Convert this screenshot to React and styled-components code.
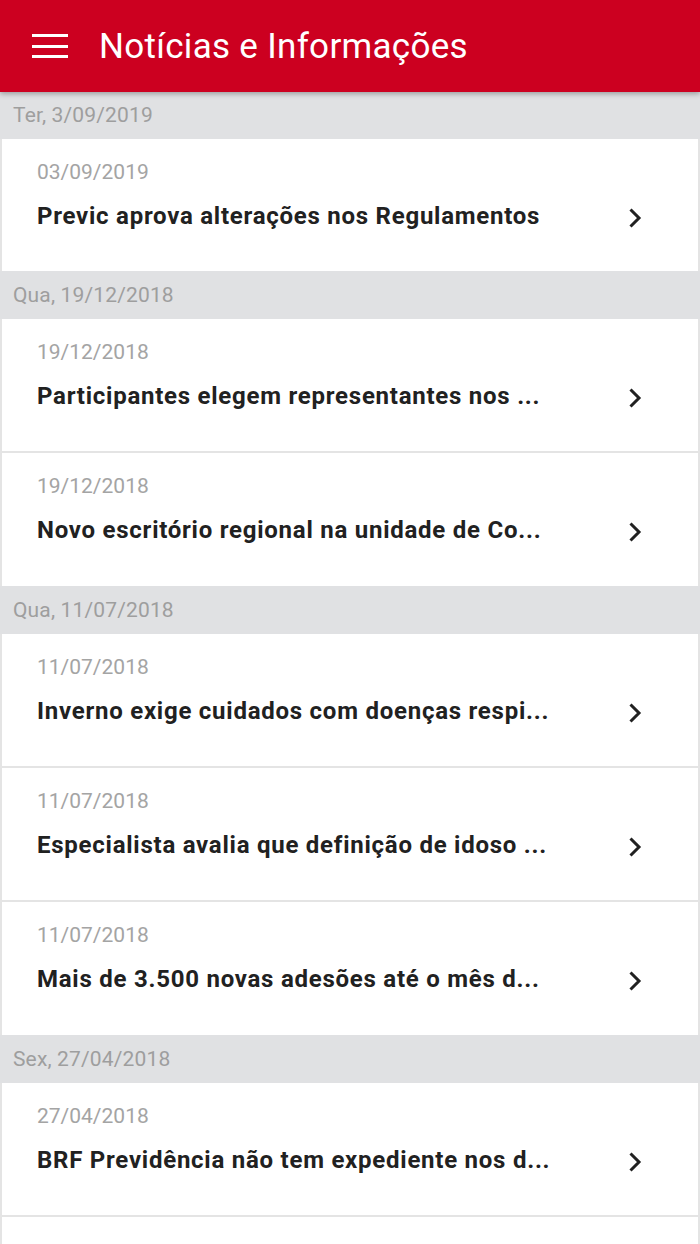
import React from 'react';
import styled, { createGlobalStyle } from 'styled-components';

const GlobalStyle = createGlobalStyle`
  body {
    margin: 0;
    background: #ffffff;
    font-family: Roboto, "Liberation Sans", sans-serif;
  }
`;

const groups = [
  {
    day: 'Ter, 3/09/2019',
    items: [{ date: '03/09/2019', title: 'Previc aprova alterações nos Regulamentos' }],
  },
  {
    day: 'Qua, 19/12/2018',
    items: [
      { date: '19/12/2018', title: 'Participantes elegem representantes nos ...' },
      { date: '19/12/2018', title: 'Novo escritório regional na unidade de Co...' },
    ],
  },
  {
    day: 'Qua, 11/07/2018',
    items: [
      { date: '11/07/2018', title: 'Inverno exige cuidados com doenças respi...' },
      { date: '11/07/2018', title: 'Especialista avalia que definição de idoso ...' },
      { date: '11/07/2018', title: 'Mais de 3.500 novas adesões até o mês d...' },
    ],
  },
  {
    day: 'Sex, 27/04/2018',
    items: [
      { date: '27/04/2018', title: 'BRF Previdência não tem expediente nos d...' },
      { date: '', title: '' },
    ],
  },
];

export default function App() {
  return (
    <Page>
      <GlobalStyle />
      <AppBar>
        <MenuButton aria-label='menu'>
          <span />
          <span />
          <span />
        </MenuButton>
        <Title>Notícias e Informações</Title>
      </AppBar>
      <List>
        {groups.map((group, g) => (
          <Group key={group.day}>
            <DayHeader>{group.day}</DayHeader>
            {group.items.map((item, i) => (
              <Item key={i} $short={g === 0}>
                {item.title && (
                  <>
                    <ItemDate>{item.date}</ItemDate>
                    <TitleRow>
                      <ItemTitle>{item.title}</ItemTitle>
                      <Chevron viewBox='0 0 14 22'>
                        <path d='M2.5 2.5 L11 11 L2.5 19.5' />
                      </Chevron>
                    </TitleRow>
                  </>
                )}
              </Item>
            ))}
          </Group>
        ))}
      </List>
    </Page>
  );
}

const Page = styled.div`
  width: 700px;
  height: 1244px;
  overflow: hidden;
  background: #ffffff;
`;

const AppBar = styled.header`
  position: relative;
  z-index: 2;
  display: flex;
  align-items: center;
  height: 92px;
  padding-left: 32px;
  background: #cc0020;
  box-shadow: 0 2px 5px rgba(0, 0, 0, 0.3);
`;

const MenuButton = styled.div`
  display: flex;
  flex-direction: column;
  justify-content: space-between;
  width: 36px;
  height: 24px;
  margin-right: 31px;

  span {
    display: block;
    height: 3px;
    background: #ffffff;
  }
`;

const Title = styled.h1`
  margin: 0;
  color: #ffffff;
  font-size: 35px;
  font-weight: 400;
  letter-spacing: 0.3px;
`;

const List = styled.main`
  display: flex;
  flex-direction: column;
  margin-top: -1px;
`;

const Group = styled.section`
  display: flex;
  flex-direction: column;
`;

const DayHeader = styled.div`
  display: flex;
  align-items: center;
  height: 48px;
  padding-left: 13px;
  background: #e0e1e3;
  color: #9e9e9e;
  font-size: 21px;
  letter-spacing: 0.15px;
`;

const Item = styled.div`
  display: flex;
  flex-direction: column;
  box-sizing: border-box;
  height: 134px;
  padding: 21px 56px 0 35px;
  border: solid #e4e4e4;
  border-width: 0 2px 2px 2px;
  background: #ffffff;
  &:last-child {
    border-bottom: 0;
    height: ${props => (props.$short ? '132px' : '133px')};
  }
`;

const ItemDate = styled.span`
  color: #a4a4a4;
  font-size: 21px;
  line-height: 24px;
`;

const TitleRow = styled.div`
  display: flex;
  align-items: center;
  margin-top: 18px;
`;

const ItemTitle = styled.span`
  flex: 1;
  min-width: 0;
  overflow: hidden;
  color: #212121;
  font-size: 24px;
  font-weight: 700;
  letter-spacing: 0.75px;
  line-height: 28px;
  white-space: nowrap;
`;

const Chevron = styled.svg`
  width: 14px;
  height: 22px;
  margin-top: 4px;
  margin-left: 20px;
  flex-shrink: 0;
  fill: none;
  stroke: #212121;
  stroke-width: 3;
`;
